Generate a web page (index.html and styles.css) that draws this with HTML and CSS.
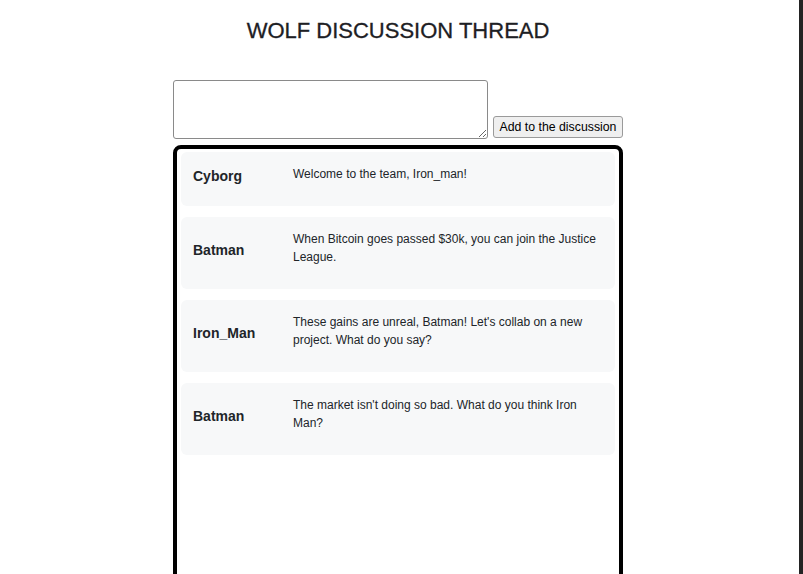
FILE: index.html
```
<!DOCTYPE html>
<html lang="en">
<head>
    <meta charset="UTF-8">
    <meta name="viewport" content="width=device-width, initial-scale=1.0">
    <title>Wolf Discussion Thread</title>
    <link rel="stylesheet" href="styles.css">
</head>
<body>
    <div class="page">
        <h1 class="title">WOLF DISCUSSION THREAD</h1>
        <div class="thread">
            <form class="post-form" onsubmit="return false">
                <textarea class="post-input"></textarea>
                <button type="submit" class="post-button">Add to the discussion</button>
            </form>
            <div class="thread-box">
                <div class="post">
                    <div class="post-author">Cyborg</div>
                    <p class="post-text">Welcome to the team, Iron_man!</p>
                </div>
                <div class="post">
                    <div class="post-author">Batman</div>
                    <p class="post-text">When Bitcoin goes passed $30k, you can join the Justice League.</p>
                </div>
                <div class="post">
                    <div class="post-author">Iron_Man</div>
                    <p class="post-text">These gains are unreal, Batman! Let's collab on a new project. What do you say?</p>
                </div>
                <div class="post">
                    <div class="post-author">Batman</div>
                    <p class="post-text">The market isn't doing so bad. What do you think Iron Man?</p>
                </div>
            </div>
        </div>
    </div>
</body>
</html>
```

FILE: styles.css
```
body {
    font-family: "Liberation Sans", Arial, sans-serif;
    color: #212529;
    margin: 0;
    padding: 0;
    background: #fff;
    overflow: hidden;
}
.page {
    box-sizing: border-box;
    min-height: 100vh;
    border-right: 4px solid #232323;
    padding-right: 3px;
    display: flex;
    flex-direction: column;
    align-items: center;
}
.title {
    font-size: 22px;
    font-weight: normal;
    line-height: 26px;
    color: #1d2024;
    -webkit-text-stroke: 0.3px #1d2024;
    margin: 18px 0 36px;
}
.thread {
    width: 450px;
}
.post-form {
    display: flex;
    align-items: flex-end;
    gap: 5px;
    margin: 0 0 6px;
}
.post-input {
    box-sizing: border-box;
    width: 315px;
    height: 59px;
    margin: 0;
    border: 1px solid #8a8a8a;
    border-radius: 3px;
    resize: vertical;
}
.post-button {
    box-sizing: border-box;
    width: 130px;
    height: 22px;
    margin: 0 0 1px;
    padding: 0;
    white-space: nowrap;
    font-family: "Liberation Sans", Arial, sans-serif;
    font-size: 12.3px;
    color: #000;
    background-color: #efefef;
    border: 1px solid #9a9a9a;
    border-radius: 3px;
}
.thread-box {
    box-sizing: border-box;
    height: 520px;
    border: 4px solid #000;
    border-radius: 8px;
    padding: 3px 4px;
    display: flex;
    flex-direction: column;
    gap: 11px;
}
.post {
    display: flex;
    align-items: center;
    padding: 13px 12px;
    background-color: #f7f8f9;
    border-radius: 6px;
}
.post-author {
    flex: 0 0 100px;
    font-size: 14px;
    font-weight: bold;
    line-height: 18px;
    margin-bottom: 6px;
}
.post-text {
    margin: 0 0 10px;
    font-size: 12px;
    line-height: 18px;
}
```
